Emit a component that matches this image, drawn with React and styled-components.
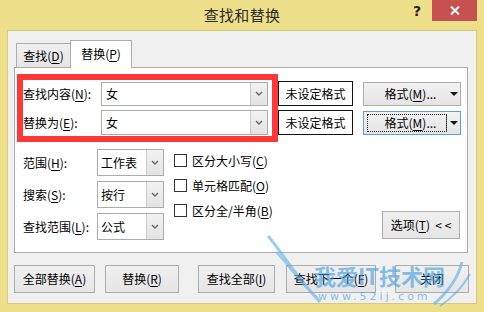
import React from 'react'
import styled, { createGlobalStyle } from 'styled-components'

const GlobalStyle = createGlobalStyle`
  html, body { margin: 0; padding: 0; }
  body {
    font-family: "Noto Sans CJK SC", "Noto Sans", sans-serif;
    font-size: 12px;
    line-height: 16px;
    color: #000;
  }
  u { text-decoration-thickness: 1px; text-underline-offset: 2px; }
`

const Window = styled.div`
  position: relative;
  width: 484px;
  height: 312px;
  background: #eee08b;
  display: flex;
  flex-direction: column;
  overflow: hidden;
`

const TitleBar = styled.div`
  height: 30px;
  display: grid;
  grid-template-columns: 1fr auto 1fr;
`

const Title = styled.div`
  grid-column: 2;
  font-size: 15px;
  line-height: 30px;
  color: #2b2b2b;
  letter-spacing: 0.3px;
`

const Controls = styled.div`
  grid-column: 3;
  display: flex;
  justify-content: flex-end;
  align-items: flex-start;
`

const Help = styled.div`
  margin: 3px 11px 0 0;
  font-family: "DejaVu Sans", sans-serif;
  font-weight: bold;
  font-size: 14px;
  line-height: 16px;
  color: #222;
`

const CloseButton = styled.div`
  width: 45px;
  height: 21px;
  margin-right: 7px;
  background: #c75050;
  display: flex;
  align-items: center;
  justify-content: center;
`

const Client = styled.div`
  flex: 1;
  margin: 0 7px 8px 7px;
  border: 1px solid #d6c97c;
  background: #f0f0f0;
  padding: 9px 8px 0 6px;
  display: flex;
  flex-direction: column;
`

const TabRow = styled.div`
  display: flex;
  align-items: flex-end;
  height: 27px;
  padding-left: 2px;
`

const Tab = styled.div`
  position: relative;
  box-sizing: border-box;
  border: 1px solid #acacac;
  border-bottom: none;
  display: flex;
  align-items: center;
  justify-content: center;
  width: ${p => (p.$active ? 62 : 55)}px;
  height: ${p => (p.$active ? 28 : 24)}px;
  margin-bottom: ${p => (p.$active ? -1 : 0)}px;
  margin-left: ${p => (p.$active ? -1 : 0)}px;
  background: ${p => (p.$active ? '#fff' : 'linear-gradient(#f0f0f0, #e5e5e5)')};
  z-index: ${p => (p.$active ? 1 : 0)};
  padding-bottom: ${p => (p.$active ? 2 : 0)}px;
`

const Panel = styled.div`
  box-sizing: border-box;
  height: 186px;
  border: 1px solid #acacac;
  background: #fff;
  padding: 13px 6px 0 8px;
  display: flex;
  flex-direction: column;
`

const FindRow = styled.div`
  display: flex;
  align-items: center;
  height: 25px;
  & + & { margin-top: 4px; }
`

const Label = styled.div`
  width: ${p => p.$w}px;
  flex: none;
  white-space: nowrap;
`

const Combo = styled.div`
  box-sizing: border-box;
  width: ${p => p.$w}px;
  height: ${p => p.$h}px;
  border: 1px solid #acacac;
  background: #fff;
  display: flex;
  align-items: stretch;
`

const ComboText = styled.div`
  flex: 1;
  padding-left: ${p => p.$pad || 4}px;
  display: flex;
  align-items: center;
`

const DropButton = styled.div`
  width: 16px;
  flex: none;
  border-left: 1px solid #c9c9c9;
  background: linear-gradient(#f2f2f2, #e3e3e3);
  display: flex;
  align-items: center;
  justify-content: center;
`

const FormatStatus = styled.div`
  box-sizing: border-box;
  width: 75px;
  height: 25px;
  margin-left: 10px;
  border: 1px solid #111;
  display: flex;
  align-items: center;
  justify-content: center;
`

const SplitButton = styled.div`
  box-sizing: border-box;
  width: 98px;
  height: 24px;
  margin-left: 10px;
  border: 1px solid ${p => (p.$focus ? '#5b9fdf' : '#adadad')};
  background: linear-gradient(#f2f2f2, #e4e4e4);
  display: flex;
  align-items: stretch;
`

const SplitMain = styled.div`
  flex: 1;
  margin: 2px 0 2px 3px;
  padding-left: 8px;
  display: flex;
  align-items: center;
  justify-content: center;
  outline: ${p => (p.$focus ? '1px dotted #222' : 'none')};
  outline-offset: -1px;
  border-right: 1px solid ${p => (p.$focus ? '#6a6a6a' : 'transparent')};
`

const SplitArrow = styled.div`
  width: 13px;
  flex: none;
  display: flex;
  align-items: center;
  justify-content: center;
`

const Options = styled.div`
  margin-top: 14px;
  display: flex;
  align-items: flex-start;
`

const OptionGrid = styled.div`
  display: grid;
  grid-template-columns: 74px 67px;
  grid-auto-rows: 27px;
  row-gap: 5px;
  align-items: center;
`

const CheckList = styled.div`
  margin: -1px 0 0 10px;
  display: flex;
  flex-direction: column;
`

const CheckRow = styled.div`
  height: 25px;
  display: flex;
  align-items: center;
  white-space: nowrap;
`

const Box = styled.div`
  box-sizing: border-box;
  width: 13px;
  height: 13px;
  border: 1px solid #333;
  background: #fff;
  margin-right: 5px;
`

const Button = styled.div`
  box-sizing: border-box;
  width: ${p => p.$w}px;
  height: 28px;
  margin-left: ${p => p.$ml || 0}px;
  border: 1px solid #adadad;
  background: linear-gradient(#f0f0f0, #e5e5e5);
  display: flex;
  align-items: center;
  justify-content: center;
  white-space: pre;
  flex: none;
`

const OptionsButton = styled(Button)`
  margin-left: auto;
  margin-right: 1px;
  margin-top: 62px;
`

const ButtonRow = styled.div`
  margin-top: 12px;
  display: flex;
`

const Marker = styled.div`
  position: absolute;
  left: 17px;
  top: 74px;
  width: 261px;
  height: 68px;
  box-sizing: border-box;
  border: 6px solid #fe3838;
  pointer-events: none;
`

const Watermark = styled.div`
  position: absolute;
  left: 262px;
  top: 232px;
  width: 215px;
  height: 78px;
  pointer-events: none;
  opacity: 0.6;
`

const MarkTitle = styled.div`
  position: absolute;
  left: 52px;
  top: 30px;
  font-size: 22px;
  line-height: 26px;
  font-weight: bold;
  color: #3d9be0;
`

const MarkUrl = styled.div`
  position: absolute;
  left: 56px;
  top: 59px;
  font-family: "DejaVu Sans", sans-serif;
  font-size: 11px;
  line-height: 12px;
  letter-spacing: 3px;
  color: #3d9be0;
`

const Chevron = () => (
  <svg width="8" height="5" viewBox="0 0 8 5">
    <path d="M1 1 L4 4 L7 1" fill="none" stroke="#666" strokeWidth="1.4" />
  </svg>
)

const Triangle = () => (
  <svg width="8" height="4" viewBox="0 0 8 4">
    <path d="M0 0 H8 L4 4 Z" fill="#111" />
  </svg>
)

const ComboBox = ({ w, h, value, pad }) => (
  <Combo $w={w} $h={h}>
    <ComboText $pad={pad}>{value}</ComboText>
    <DropButton><Chevron /></DropButton>
  </Combo>
)

const FormatButton = ({ focus }) => (
  <SplitButton $focus={focus}>
    <SplitMain $focus={focus}>格式(<u>M</u>)...</SplitMain>
    <SplitArrow><Triangle /></SplitArrow>
  </SplitButton>
)

export default function App () {
  return (
    <>
      <GlobalStyle />
      <Window>
        <TitleBar>
          <Title>查找和替换</Title>
          <Controls>
            <Help>?</Help>
            <CloseButton>
              <svg width="10" height="9" viewBox="0 0 10 9">
                <path d="M1 0.5 L9 8.5 M9 0.5 L1 8.5" stroke="#fff" strokeWidth="2" />
              </svg>
            </CloseButton>
          </Controls>
        </TitleBar>
        <Client>
          <TabRow>
            <Tab>查找(<u>D</u>)</Tab>
            <Tab $active>替换(<u>P</u>)</Tab>
          </TabRow>
          <Panel>
            <FindRow>
              <Label $w={78}>查找内容(<u>N</u>):</Label>
              <ComboBox w={167} h={24} value="女" />
              <FormatStatus>未设定格式</FormatStatus>
              <FormatButton />
            </FindRow>
            <FindRow>
              <Label $w={78}>替换为(<u>E</u>):</Label>
              <ComboBox w={167} h={25} value="女" />
              <FormatStatus>未设定格式</FormatStatus>
              <FormatButton focus />
            </FindRow>
            <Options>
              <OptionGrid>
                <Label $w={74}>范围(<u>H</u>):</Label>
                <ComboBox w={67} h={27} value="工作表" pad={3} />
                <Label $w={74}>搜索(<u>S</u>):</Label>
                <ComboBox w={67} h={27} value="按行" pad={3} />
                <Label $w={74}>查找范围(<u>L</u>):</Label>
                <ComboBox w={67} h={27} value="公式" pad={3} />
              </OptionGrid>
              <CheckList>
                <CheckRow><Box />区分大小写(<u>C</u>)</CheckRow>
                <CheckRow><Box />单元格匹配(<u>O</u>)</CheckRow>
                <CheckRow><Box />区分全/半角(<u>B</u>)</CheckRow>
              </CheckList>
              <OptionsButton $w={78}>选项(<u>T</u>)  &lt; &lt;</OptionsButton>
            </Options>
          </Panel>
          <ButtonRow>
            <Button $w={81}>全部替换(<u>A</u>)</Button>
            <Button $w={74} $ml={10}>替换(<u>R</u>)</Button>
            <Button $w={77} $ml={19}>查找全部(<u>I</u>)</Button>
            <Button $w={90} $ml={11}>查找下一个(<u>F</u>)</Button>
            <Button $w={74} $ml={19}>关闭</Button>
          </ButtonRow>
        </Client>
        <Marker />
        <Watermark>
          <svg width="215" height="78" viewBox="0 0 215 78">
            <path d="M6 4 C20 20 30 40 58 70" fill="none" stroke="#5aaee8" strokeWidth="3" />
            <path d="M14 20 C28 34 36 50 56 66" fill="none" stroke="#5aaee8" strokeWidth="2" />
            <path d="M200 30 C196 46 186 60 172 72" fill="none" stroke="#5aaee8" strokeWidth="3" />
            <path d="M208 42 C200 56 190 66 178 74" fill="none" stroke="#5aaee8" strokeWidth="2" />
          </svg>
          <MarkTitle>我爱IT技术网</MarkTitle>
          <MarkUrl>www.52ij.com</MarkUrl>
        </Watermark>
      </Window>
    </>
  )
}
